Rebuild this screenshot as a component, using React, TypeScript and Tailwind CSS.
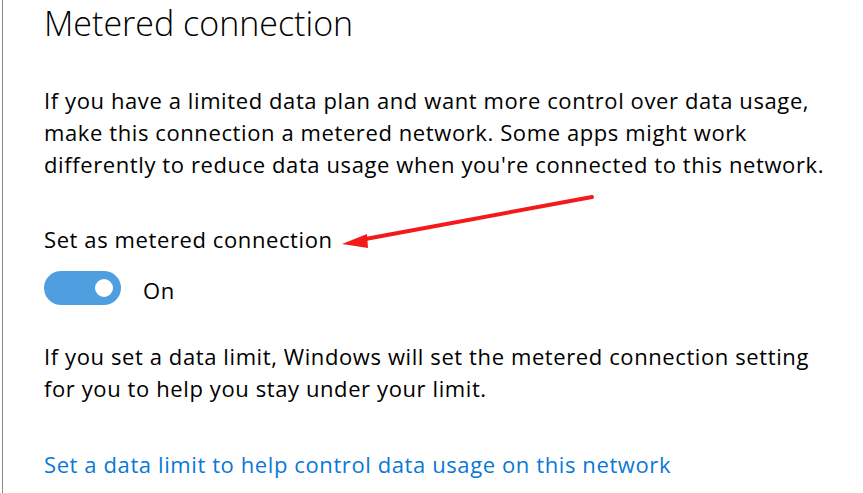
import React from 'react';

function Toggle({ on }: { on: boolean }) {
  return (
    <div className="flex items-center gap-[22px] h-[34px]">
      <div className="relative w-[77px] h-[34px] rounded-full bg-[#4f9fe0]">
        <span className="absolute right-[8px] top-[8px] w-[18px] h-[18px] rounded-full bg-white" />
      </div>
      <span className="text-[22px] tracking-[0.6px] text-black leading-[34px] translate-y-[2px]">{on ? 'On' : 'Off'}</span>
    </div>
  );
}

export default function App() {
  return (
    <div
      className="relative w-[863px] h-[493px] bg-white overflow-hidden"
      style={{ fontFamily: '"Open Sans", "Noto Sans", sans-serif' }}
    >
      <div className="ml-[2px] h-full border-l border-[#8a8a8a] pl-[41px]">
        <h1 className="text-[34px] font-light text-black leading-none pt-[6px]">Metered connection</h1>

        <p className="mt-[44px] text-[22px] tracking-[0.6px] leading-[32px] text-black">
          If you have a limited data plan and want more control over data usage,
          <br />
          make this connection a metered network. Some apps might work
          <br />
          differently to reduce data usage when you're connected to this network.
        </p>

        <p className="mt-[43px] text-[22px] tracking-[0.6px] leading-[32px] text-black">Set as metered connection</p>

        <div className="mt-[16px]">
          <Toggle on />
        </div>

        <p className="mt-[35px] text-[22px] tracking-[0.6px] leading-[32px] text-black">
          If you set a data limit, Windows will set the metered connection setting
          <br />
          for you to help you stay under your limit.
        </p>

        <a href="#" className="block mt-[44px] text-[22px] tracking-[0.6px] leading-[32px] text-[#0a78d7]">
          Set a data limit to help control data usage on this network
        </a>
      </div>

      {/* annotation arrow */}
      <svg className="absolute left-0 top-0 pointer-events-none" width="863" height="493">
        <line x1="592" y1="197" x2="360" y2="240" stroke="#f41a1a" strokeWidth="4" strokeLinecap="round" />
        <polygon points="342,244 367,234 368,248" fill="#f41a1a" />
      </svg>
    </div>
  );
}
